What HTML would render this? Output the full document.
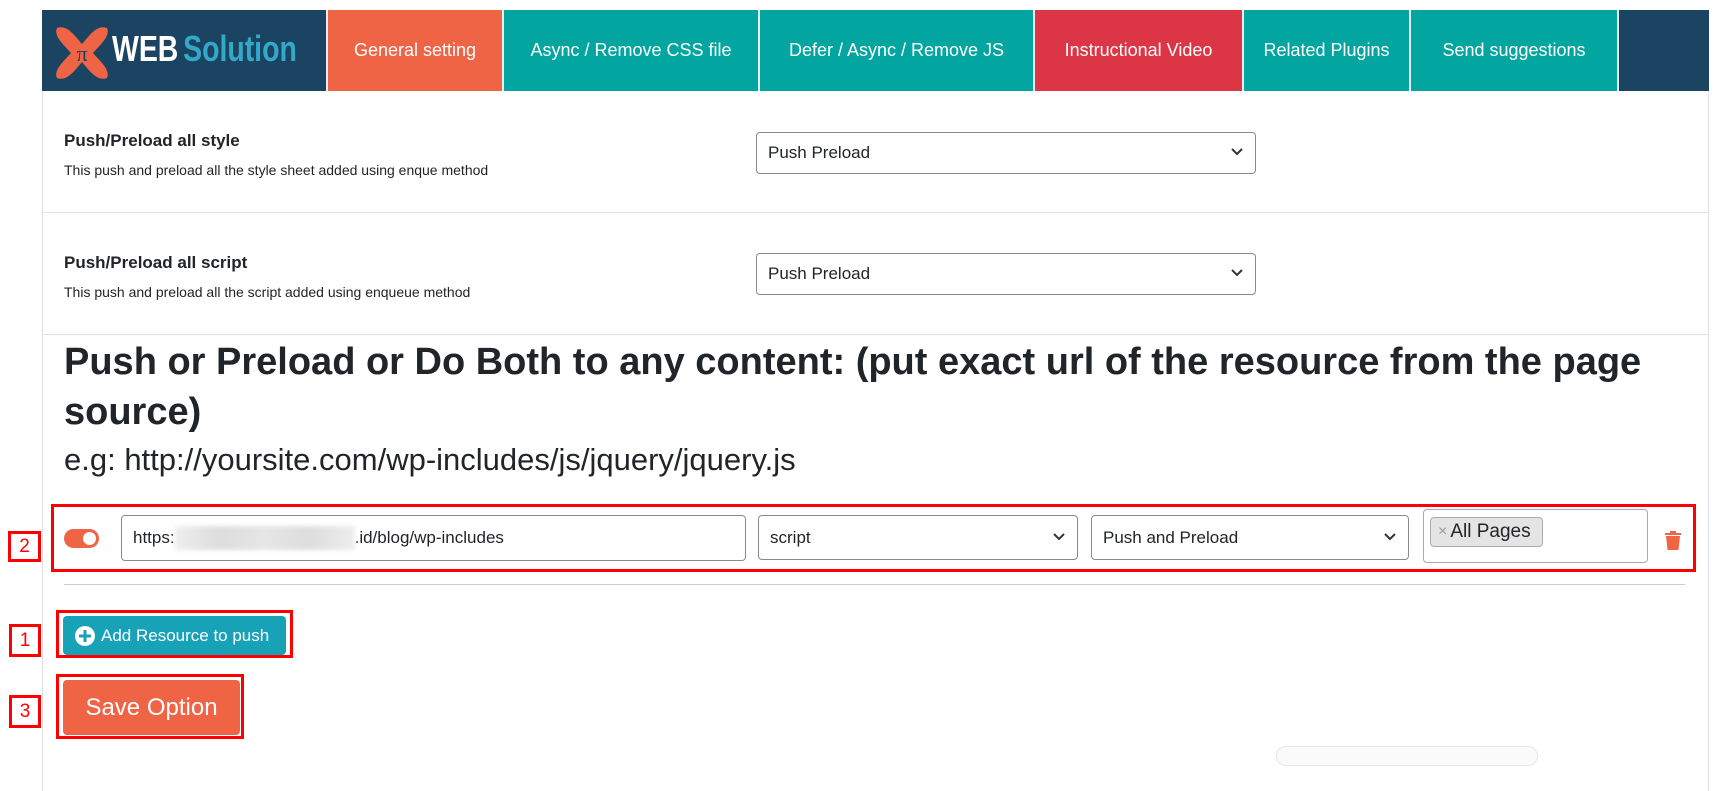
<!DOCTYPE html>
<html><head><meta charset="utf-8"><style>
*{box-sizing:border-box;margin:0;padding:0}
body{width:1717px;height:751px;background:#fff;font-family:"Liberation Sans",sans-serif;color:#212529;position:relative;overflow:hidden}
.abs{position:absolute}
.nav{left:42px;top:10px;width:1667px;height:81px;background:#1b4463}
.tab{position:absolute;top:10px;height:81px;color:#fff;font-size:18px;display:flex;align-items:center;justify-content:center;border-left:2px solid #e8eef2}
.panel{left:42px;top:91px;width:1667px;height:700px;border-left:1px solid #dee2e6;border-right:1px solid #dee2e6}
.t{font-size:17px;font-weight:bold;color:#212529}
.d{font-size:14px;color:#212529}
.sel{border:1px solid #8a8a8a;border-radius:4px;background:#fff;font-size:17px;color:#212529;display:flex;align-items:center;padding-left:11px}
.sel svg{position:absolute;right:12px;top:50%;margin-top:-5px}
.hr{height:1px;background:#dee2e6}
.red{border:3px solid #f00}
.lab{border:3px solid #f00;font-size:19px;color:#f00;display:flex;align-items:center;justify-content:center;background:#fff}
</style></head><body>
<div class="abs nav"></div>
<svg class="abs" style="left:53px;top:22px" width="58" height="62" viewBox="0 0 58 62"><path d="M4 6 C14 2 22 14 29 22 C36 14 44 2 54 6 C58 14 46 24 40 31 C46 38 58 48 54 56 C44 60 36 48 29 40 C22 48 14 60 4 56 C0 48 12 38 18 31 C12 24 0 14 4 6Z" fill="#ef6445"/><text x="29" y="39" font-family="Liberation Serif,serif" font-size="22" fill="#1b4463" text-anchor="middle">π</text></svg>
<div class="abs" style="left:112px;top:29px;font-size:36px;line-height:40px;font-weight:bold;color:#fff;white-space:nowrap;transform:scaleX(0.79);transform-origin:left">WEB<span style="color:#33a9c8;margin-left:6px">Solution</span></div>
<div class="tab" style="left:326px;width:176px;background:#ef6445">General setting</div>
<div class="tab" style="left:502px;width:256px;background:#02a59f">Async / Remove CSS file</div>
<div class="tab" style="left:758px;width:275px;background:#02a59f">Defer / Async / Remove JS</div>
<div class="tab" style="left:1033px;width:209px;background:#dc3545">Instructional Video</div>
<div class="tab" style="left:1242px;width:167px;background:#02a59f">Related Plugins</div>
<div class="tab" style="left:1409px;width:208px;background:#02a59f">Send suggestions</div>
<div class="tab" style="left:1617px;width:92px;background:#1b4463"></div>
<div class="abs panel"></div>

<div class="abs t" style="left:64px;top:131px">Push/Preload all style</div>
<div class="abs d" style="left:64px;top:162px">This push and preload all the style sheet added using enque method</div>
<div class="abs sel" style="left:756px;top:132px;width:500px;height:42px">Push Preload<svg width="12" height="8" viewBox="0 0 12 8"><path d="M1 1l5 5 5-5" stroke="#333" stroke-width="2" fill="none"/></svg></div>
<div class="abs hr" style="left:43px;top:212px;width:1665px"></div>

<div class="abs t" style="left:64px;top:253px">Push/Preload all script</div>
<div class="abs d" style="left:64px;top:284px">This push and preload all the script added using enqueue method</div>
<div class="abs sel" style="left:756px;top:253px;width:500px;height:42px">Push Preload<svg width="12" height="8" viewBox="0 0 12 8"><path d="M1 1l5 5 5-5" stroke="#333" stroke-width="2" fill="none"/></svg></div>
<div class="abs hr" style="left:43px;top:334px;width:1665px"></div>

<div class="abs" style="left:64px;top:337px;font-size:38px;font-weight:bold;line-height:50px;width:1630px">Push or Preload or Do Both to any content: (put exact url of the resource from the page source)</div>
<div class="abs" style="left:64px;top:440px;font-size:31px;line-height:40px">e.g: http://yoursite.com/wp-includes/js/jquery/jquery.js</div>

<div class="abs red" style="left:51px;top:504px;width:1645px;height:68px"></div>
<div class="abs lab" style="left:8px;top:531px;width:33px;height:31px">2</div>
<div class="abs" style="left:64px;top:529px;width:35px;height:19px;border-radius:10px;background:#ef6445"><div class="abs" style="right:3px;top:3px;width:13px;height:13px;border-radius:50%;background:#fff"></div></div>
<div class="abs sel" style="left:121px;top:515px;width:625px;height:46px;font-size:17px">https:<span style="display:inline-block;width:180px;height:24px;background:linear-gradient(90deg,#eee,#ddd,#e6e6e6,#ddd,#eee);filter:blur(2px)"></span>.id/blog/wp-includes</div>
<div class="abs sel" style="left:758px;top:515px;width:320px;height:45px">script<svg width="12" height="8" viewBox="0 0 12 8"><path d="M1 1l5 5 5-5" stroke="#333" stroke-width="2" fill="none"/></svg></div>
<div class="abs sel" style="left:1091px;top:515px;width:318px;height:45px">Push and Preload<svg width="12" height="8" viewBox="0 0 12 8"><path d="M1 1l5 5 5-5" stroke="#333" stroke-width="2" fill="none"/></svg></div>
<div class="abs" style="left:1423px;top:509px;width:225px;height:54px;border:1px solid #aaa;border-radius:4px"></div>
<div class="abs" style="left:1430px;top:517px;width:113px;height:30px;background:#e4e4e4;border:1px solid #aaa;border-radius:4px;font-size:19px;display:flex;align-items:center;padding-left:7px"><span style="color:#999;font-size:16px;margin-right:3px">×</span>All Pages</div>
<svg class="abs" style="left:1665px;top:530px" width="16" height="20" viewBox="0 0 16 20"><path d="M5 1h6v2h5v2H0V3h5z" fill="#ef6445"/><path d="M1 6h14l-1.5 14h-11z" fill="#ef6445"/></svg>
<div class="abs hr" style="left:64px;top:584px;width:1621px;background:#ccc"></div>

<div class="abs red" style="left:56px;top:610px;width:237px;height:48px"></div>
<div class="abs lab" style="left:9px;top:624px;width:32px;height:33px">1</div>
<div class="abs" style="left:63px;top:616px;width:223px;height:39px;background:#17a2b8;border-radius:4px;color:#fff;font-size:17px;display:flex;align-items:center;padding-left:12px"><svg width="20" height="20" viewBox="0 0 20 20" style="margin-right:6px"><circle cx="10" cy="10" r="10" fill="#fff"/><path d="M10 4v12M4 10h12" stroke="#17a2b8" stroke-width="3"/></svg>Add Resource to push</div>

<div class="abs red" style="left:56px;top:674px;width:188px;height:65px"></div>
<div class="abs lab" style="left:9px;top:695px;width:32px;height:33px">3</div>
<div class="abs" style="left:63px;top:680px;width:177px;height:55px;background:#ef6445;border-radius:4px;color:#fff;font-size:24px;display:flex;align-items:center;justify-content:center">Save Option</div>
<div class="abs" style="left:1276px;top:746px;width:262px;height:20px;border:1px solid #e6e6e6;border-radius:10px;background:#fafafa"></div>
</body></html>
